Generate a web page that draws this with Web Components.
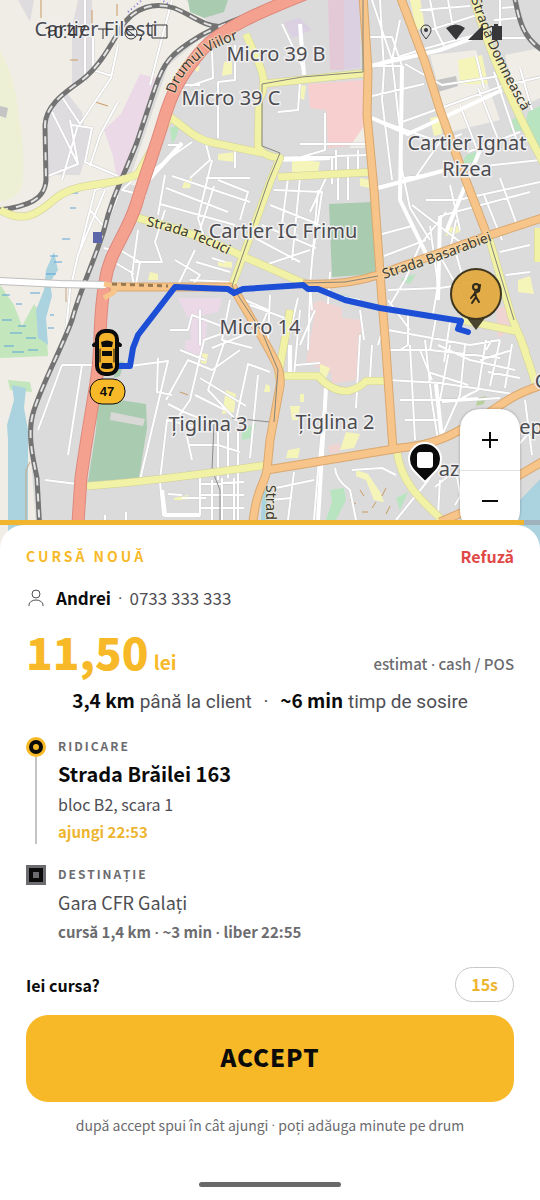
<!DOCTYPE html>
<html lang="ro">
<head>
<meta charset="utf-8">
<meta name="viewport" content="width=device-width, initial-scale=1">
<title>Cursă nouă</title>
<style>
  body {
    margin: 0;
    background: #fff;
    color: #0b0b0c;
    font-family: "Noto Sans CJK SC", "Noto Sans", sans-serif;
    --accent: #f7b928;
    --danger: #e04848;
    --muted: #6c6c70;
    --soft: #4e4e54;
  }

  /* the CJK face has a very wide middle dot */
  i {
    font-family: Roboto, sans-serif;
    font-style: normal;
  }
</style>
</head>
<body>
<ride-app>
  <ride-map slot="map"></ride-map>
  <system-bar slot="map">10:47</system-bar>
  <zoom-control slot="map"></zoom-control>

  <ride-timer slot="sheet" left="97"></ride-timer>
  <ride-sheet slot="sheet">
    <ride-header>CURSĂ NOUĂ</ride-header>
    <ride-client phone="0733 333 333">Andrei</ride-client>
    <ride-price unit="lei">11,50<span slot="note">estimat <i>·</i> cash / POS</span></ride-price>
    <ride-metrics>
      <b>3,4 km</b> până la client <i>·</i> <b>~6 min</b> timp de sosire
    </ride-metrics>
    <ride-stop kind="pickup" label="RIDICARE">
      Strada Brăilei 163
      <span slot="detail">bloc B2, scara 1</span>
      <span slot="time">ajungi 22:53</span>
    </ride-stop>
    <ride-stop kind="dropoff" label="DESTINAȚIE">
      Gara CFR Galați
      <span slot="time">cursă 1,4 km <i>·</i> ~3 min <i>·</i> liber 22:55</span>
    </ride-stop>
    <ride-confirm seconds="15">
      Iei cursa?
      <span slot="note">după accept spui în cât ajungi <i>·</i> poți adăuga minute pe drum</span>
    </ride-confirm>
  </ride-sheet>
</ride-app>

<script>
(function () {
  // registers an element that only clones its markup; %name% is filled from attributes
  function define(name, html) {
    class Part extends HTMLElement {
      constructor() {
        super();
        this.attachShadow({mode: 'open'});
      }

      connectedCallback() {
        const template = document.createElement('template');
        template.innerHTML = html.replace(/%(\w+)%/g, (all, key) => this.getAttribute(key) || '');
        this.shadowRoot.replaceChildren(template.content.cloneNode(true));
      }
    }

    window.customElements.define(name, Part);
  }

  define('ride-app', `
    <style>
      :host {
        display: flex;
        flex-direction: column;
        min-height: 100vh;
      }
      .map {
        position: relative;
        flex: 1;
        min-height: 320px;
        /* the map goes on behind the rounded corners of the sheet */
        margin-bottom: -32px;
        overflow: hidden;
      }
      .sheet {
        position: relative;
      }
    </style>
    <div class="map"><slot name="map"></slot></div>
    <main class="sheet"><slot name="sheet"></slot></main>
  `);

  define('ride-map', `
    <style>
      :host { position: absolute; inset: 0; }
      svg { display: block; width: 100%; height: 100%; }
      path { stroke-linejoin: round; }
      .line path, .line use { fill: none; }
      .place { font: 20px "Noto Sans", sans-serif; fill: #4c4c50; stroke: #f0f0f0; stroke-width: 3; paint-order: stroke; text-anchor: middle; }
      .street { font: 14px "Noto Sans", sans-serif; fill: #3c3a30; stroke: #f5f0cf; stroke-width: 2; stroke-opacity: .5; paint-order: stroke; }
      .badge { font: bold 13px "Liberation Sans", Arial, sans-serif; text-anchor: middle; fill: #0b0b0c; }
    </style>
    <svg viewBox="0 0 540 552" preserveAspectRatio="xMidYMin slice" role="img" aria-label="Hartă">
      <defs>
        <path id="red" d="M305-6C260 12 222 28 202 50C180 76 172 92 163 122C154 152 146 172 136 205C126 236 109 252 105 282C98 320 102 340 97 376C92 410 86 440 81 478L76 552"/>
        <path id="rail" d="M0 210C28 206 45 200 46 180L45 125C46 104 66 92 82 80C100 66 110 46 121 28C134 6 156 2 174 8C194 16 202 26 222 27M285 0C260 12 220 24 200 36C170 54 164 62 155 88L137 142C124 176 112 196 104 230C94 262 80 290 72 320C60 352 44 380 34 410C26 434 34 462 37 478L41 552M514-6C519 20 522 38 545 52"/>
        <path id="yellow" d="M0 210C24 224 38 214 56 198C80 180 110 188 138 174L170 117C186 128 196 140 214 143L262 153M246 34C254 56 272 78 259 100L258 146Q262 156 280 158L270 182L232 286M262 84L367 73M278 177L374 172M134 217C170 226 206 238 240 255L310 286M87 486C150 482 200 474 268 465M280 376H318Q332 392 348 391Q360 388 366 381H388M473-4C488 50 516 112 545 166M489 238L512 318L526 352M462 320L515 331M520 336C526 356 532 370 536 386M397 452C402 486 424 502 442 520M538 228V262M278 378L290 310"/>
        <path id="orange" d="M363-4L368 70L367 115L374 190L382 300L386 350L393 450M400-4L425 62L440 110L460 165L487 235M104 287H232M303 284Q345 286 378 275L487 236L545 217M232 286L258 330C276 362 282 370 280 386L270 440L267 470C264 486 256 488 252 530M267 470L400 448C444 444 460 430 490 412C510 398 520 392 545 384M518 476L545 460M440 522L468 510"/>
        <path id="lines" d="M85 0V82M93 30V70L112 76M172 0L164 30L150 85M118 45L111 78L80 124L60 94M52 112L78 164L70 120M72 125L92 128L85 162L118 176M78 164L48 176M118 102L100 135L90 166M78 125L62 180M212 50L213 78L190 86M178 85H200M235 45V80L218 82M218 82V138M205 140L210 160L190 178M168 145H182L150 180M192 142L150 172M235 150V168M282 24L302 66L304 75M300 82L298 110L278 112M325 113V150L298 158M300 144H366M270 158L368 155M336 150V170M348 155V172M358 150V172M372 0L392 60L400 130L402 170L410 208L430 240M380 0L384 70L382 100L392 180M370 37H392L402 66H370M392 60L400 20M370 66L420 50L478 34M405 64L442 85L500 76M372 96L424 84M372 118L406 130L440 142L415 178L378 188M402 122L502 86L545 76M430 0L436 30L444 46M448 0L456 44M420 10L470 6M430 30L480 14M478 88L500 144M460 105L478 152M494 72L516 138M520 68L532 110M440 142L462 134M500 0V38H525M518 18L494 20M502 8L514 7M468 152L520 132M404 178L455 170M476 55L484 88M450 185L460 230M426 200H458L540 182M440 216L530 192M484 195L502 240M500 178L518 228M446 212L420 245L405 280L390 305M374 188L446 170L540 160M382 234L412 226M384 256L426 240M430 226L438 285L432 320M456 220L450 250M388 290L440 288L478 282M440 256L470 310M388 300L410 330M412 205L468 248M455 250L465 285M388 330L470 345L500 340M408 312V345L400 350M436 318L430 350M450 322L444 362M500 252L530 245M506 275L530 272M492 340L486 350M388 380L440 383L500 392L520 395M410 345L415 440M390 350H430L500 358M425 340L432 402L438 440M438 345L470 360L515 370M450 345L440 400M465 345L460 395L440 440M486 340L478 390L462 398M500 340L490 386M512 344L505 388M400 400H440L478 398M405 420H440M442 402L500 398M420 350L432 380M428 372L468 385M480 360L512 350M488 372L520 378M100 364L92 365H62L38 430M82 365L68 455M130 366L168 361L140 480M158 358L157 392L172 395M166 400L188 360L212 370L240 350M176 420L190 400L204 340L232 330M168 404L184 412L214 424M195 395L225 410M160 480L167 420L200 428M188 445H218L240 452M187 437L192 460M225 340L208 390L236 420L248 364L270 372M180 350L205 360M212 348L256 330M200 378L246 406M228 425V478M238 428V520M218 426V480M258 375L250 458M45 480L85 485M160 482L163 515H200V478M105 515V520M126 512V520M200 484L244 482M200 495H244M200 508H244M212 480V520M222 478V520M234 478V520M168 494L182 495M182 498H206M290 345V375M300 310L294 376M315 310L300 345M296 365L320 363M360 335L356 408M372 345L370 378M326 388L318 470L314 520M335 468Q336 480 350 490L356 520M352 470L382 468L396 475M276 488L314 480M294 472L288 520M270 500L292 498M430 478L396 520M455 465L462 505L490 490M440 480L438 515M470 480L455 505M435 487L458 468L520 440M525 400L532 455M500 466L536 425M146 196L122 190L142 172M165 175L158 215M160 204L235 225M166 188L228 212M172 176L250 202M206 178H250M214 186L200 230M212 160L198 218L205 240M218 180L248 192L240 220M165 210L155 242L162 262H135M138 230L132 275L135 290M120 250L140 262L136 284M114 262L134 274M104 248L118 252M175 260L200 275L190 288M190 280L232 282M195 250L178 285M212 258L225 262M196 262L230 272M170 330H188L192 315L232 330M230 300L222 340L252 348M200 310V345M245 300L268 310L260 330M250 305L290 320M270 205L320 225M274 190L322 192L312 260M262 225L316 248M255 238L300 262M318 190L310 285M288 178L280 240M300 178L292 260M338 172V200M332 156V184M348 172V200M326 178L310 212M265 265L310 250M330 272L328 304M310 285L312 310M270 295L268 340M298 298L288 340M310 292L308 350M332 295L360 300M360 310L364 340M384 325L378 345M118 195L105 228L90 210M105 190L78 255L70 290L66 330M120 180L95 190L80 250"/>
        <path id="domneasca" d="M471-1C486 46 509 88 523 112"/>
        <path id="basarabiei" d="M384 279L430 264L492 241"/>
        <path id="tecuci" d="M146 226C176 232 204 242 230 256"/>
        <path id="viilor" d="M175 94C182 70 204 50 236 40"/>
        <path id="strad" d="M266 485V552"/>
      </defs>

      <!-- land use -->
      <path fill="#dcdbdc" d="M0 0H540V552H0Z"/>
      <path fill="#f0ede6" d="M0 0H186L212 26L162 64L118 180L66 340L28 420L38 552H0Z"/>
      <path fill="#f0ede6" d="M205 34L168 66L128 184L136 186L166 98L200 50ZM430 55L476 50L500 120L450 132ZM505 55L540 48V98L518 108ZM352 130L365 126V148H350Z"/>
      <path fill="#edf0d5" d="M0 50Q16 80 18 110Q26 150 22 188Q14 200 0 202Z"/>
      <path fill="#dedcdf" d="M78 0H92V75L72 84V28ZM52 102L66 92L82 112L84 126L94 128L80 175H48V122ZM18 0H34L30 22Z"/>
      <path fill="#ebd9e8" d="M140 74L156 78L121 180H117L113 156L104 130L121 114ZM178 298H222L218 312L188 318ZM190 318H208L204 350H192ZM186 340H200V354H184Z"/>
      <path fill="#e2c9d5" d="M328 0H344V70H330Z"/>
      <path fill="#dad0e2" d="M344 0H360V68L344 69ZM284 22L300 18L312 30L292 38Z"/>
      <path fill="#f7cfce" d="M308 84L364 80V126L350 146L328 148L326 110L310 108Z"/>
      <path fill="#f0d4d1" d="M320 300L342 308V318L362 320L356 380L332 384V374L306 362L314 318L308 306ZM496 308L508 306L510 330L498 338ZM328 446L340 443V452L330 454Z"/>
      <path fill="#a9cbaf" d="M188 0H228L224 12L204 18L190 12ZM329 204L372 202L376 274L332 277ZM98 402L120 400L146 404L147 428L139 478L88 482L96 430ZM114 360L124 362L120 376L114 378Z"/>
      <path fill="#d8d8d7" d="M111 412L145 419L143 426L110 420Z"/>
      <path fill="#c3e6bd" d="M0 285L14 305L22 326L34 304L46 322L48 356L0 358ZM8 380L30 382L32 392L10 390ZM0 320L12 340L46 342V356H0Z"/>
      <path fill="#aad3df" d="M54 252L58 270L50 282L52 296L46 318L48 345L38 338L36 310L44 290L46 270ZM12 385L26 388L24 408L28 430V552H8V440L7 425L14 400ZM520 500L545 474V552H518ZM262 488L266 480L270 552H260Z"/>
      <path fill="#b8e4c0" d="M512 120L522 114L524 130L510 132ZM528 112L540 106V156L524 130ZM466 155L476 152V162L462 164ZM402 278L416 274L410 284L402 282ZM242 428L256 424L252 438L242 440ZM330 490L344 488L346 500L336 520H326L332 502ZM170 128L180 124L176 138L172 144ZM340 294L356 298L352 306ZM396 498L408 492L400 510Z"/>
      <path fill="#f6f5b9" d="M458 60L482 55L488 84L460 84ZM410 0L420-2L425 28L416 30ZM300 85L306 86L304 100L300 98ZM430 118L440 116L442 134L434 136ZM445 230L460 224V232L446 236ZM518 280L530 276L534 294L518 292ZM226 390L236 394L234 412L222 414ZM200 353L208 354L206 364L198 362ZM320 364L330 368L326 378L320 376ZM346 432L360 434L354 448L340 450ZM290 406L300 406L298 420H292ZM300 394L304 394V402H300ZM218 154L236 152L234 162L218 160ZM224 62L232 60V74L222 76ZM192 68L200 66L198 72ZM356 470L368 474L380 492L384 502L374 500L366 480L356 476ZM288 450L300 448L298 458H286ZM184 182L192 178L190 188L182 188ZM150 272L158 274V280H148ZM292 159L320 162L318 172H292ZM218 260L232 262V268L218 266ZM360 178L370 180V188L360 186ZM174 498L188 495V500H174ZM266 384L270 386V392H264ZM498 62L504 60L506 78L500 80Z"/>
      <path fill="#c4c4c4" d="M437 80L456 76L458 86L438 92ZM0 106L8 108L6 118L0 116Z"/>
      <path fill="#b7cf9b" d="M478 398L486 396L484 404L476 406Z"/>
      <g class="line">
        <path stroke="#5aa3d8" stroke-width="1" d="M72 193H78M70 208H76M62 239H70M50 256H58M54 262H62M46 274H56M2 295H10M16 304H22M30 293H40M2 320H12M10 333H22M26 338H36M4 346H14M48 328H54M50 315H54M12 352H24M28 350H38M18 326H26"/>
        <path stroke="#c99a62" stroke-width="1" d="M41 0V18M92 10V28M117 4V16M70 60H78M95 102L108 106M350 500L356 504M360 490L364 496M372 508L376 502M386 488L382 496M362 512H368M390 506L386 514M180 392L188 395"/>
        <path stroke="#7a74d8" stroke-width="2" stroke-dasharray="1 3" d="M128 12L142 0M160-1L172 6"/>
        <path stroke="#c4a685" stroke-width="1" d="M66 284L66 302M30 462L26 470V552"/>

        <!-- streets -->
        <use href="#lines" stroke="#cfcfd1" stroke-width="3"/>
        <use href="#lines" stroke="#fff" stroke-width="2"/>
        <path stroke="#fff" stroke-width="4" d="M370 66L440 50L478 36M372 118L408 134L502 90M378 188L446 170M402 66L400 200L430 262M446 232L480 150M440 216L438 300M300 24L304 75M182 143L150 178M326 388L318 520M436 384L442 440M290 345V376M276 160L330 158M162 490L165 515H200"/>
        <path stroke="#8b8b8b" stroke-width="1" d="M232 418L270 422M214 424L212 470L220 490V552"/>
        <use href="#rail" stroke="#737373" stroke-width="5"/>
        <use href="#rail" stroke="#e4e4e4" stroke-width="2" stroke-dasharray="8 8"/>
        <use href="#yellow" stroke="#cfcf98" stroke-width="8"/>
        <use href="#yellow" stroke="#f1f2a5" stroke-width="7"/>
        <use href="#orange" stroke="#d9a970" stroke-width="9"/>
        <use href="#orange" stroke="#f7c489" stroke-width="7"/>
        <use href="#red" stroke="#dd897d" stroke-width="13"/>
        <use href="#red" stroke="#f4a190" stroke-width="11"/>
        <path stroke="#bdbdbd" stroke-width="8" d="M0 281L60 284L104 285"/>
        <path stroke="#fff" stroke-width="6" d="M0 281L60 284L106 285"/>
        <path stroke="#f7c489" stroke-width="5" d="M104 284L116 286L114 292L104 298"/>
        <!-- tram -->
        <path stroke="#85857a" stroke-width="1" d="M363-4V72L302 77L262 84V146L280 153L268 182L232 286L262 332L278 370L274 422M303 283L345 282L378 276M489 238L514 320"/>
        <path stroke="#9a7a50" stroke-width="3" stroke-dasharray="5 4" d="M112 284L168 286"/>
      </g>
      <path fill="#5c66a8" d="M93 232H102V243H93Z"/>

      <g class="place">
        <text x="96" y="36">Cartier Filești</text>
        <text x="276" y="61">Micro 39 B</text>
        <text x="231" y="105">Micro 39 C</text>
        <text x="467" y="150">Cartier Ignat</text>
        <text x="467" y="176">Rizea</text>
        <text x="283" y="238">Cartier IC Frimu</text>
        <text x="260" y="334">Micro 14</text>
        <text x="208" y="431">Țiglina 3</text>
        <text x="335" y="429">Țiglina 2</text>
        <text x="449" y="476">az</text>
        <text x="531" y="434">ep</text>
        <text x="541" y="388">C</text>
      </g>
      <g class="street">
        <text><textPath href="#viilor">Drumul Viilor</textPath></text>
        <text><textPath href="#tecuci">Strada Tecuci</textPath></text>
        <text><textPath href="#basarabiei">Strada Basarabiei</textPath></text>
        <text><textPath href="#domneasca">Strada Domnească</textPath></text>
        <text><textPath href="#strad">Strad</textPath></text>
      </g>

      <path fill="none" stroke="#1c4fd6" stroke-width="6" stroke-linecap="round" d="M118 366H130L133 348L138 335L175 287L228 289L234 293L243 289L303 285L308 289L318 289L345 300L380 308L461 321L458 329L468 332"/>

      <!-- taxi -->
      <g stroke-linecap="round">
        <path stroke="#0b0b0c" stroke-width="4" d="M94 345L98 342M120 345L116 342"/>
        <rect x="97" y="331" width="20" height="43" rx="8" fill="#f4b32a" stroke="#0b0b0c" stroke-width="4"/>
        <path fill="#0b0b0c" d="M101 342Q107 339 113 342L112 347H102ZM102 351H112V356H102ZM102 363H112L113 368Q107 370 101 368Z"/>
        <path stroke="#0b0b0c" d="M100 349V362M114 349V362"/>
      </g>
      <rect x="90" y="379" width="35" height="25" rx="12" fill="#f7b928" stroke="#0b0b0c" stroke-width="1"/>
      <text class="badge" x="107" y="396">47</text>

      <!-- client -->
      <path fill="#4a432f" d="M467 318H485L476 330Z"/>
      <circle cx="476" cy="294" r="25" fill="#e2a83c" fill-opacity=".92" stroke="#3e361f" stroke-width="2"/>
      <g fill="none" stroke="#2d281a" stroke-width="2" stroke-linecap="round">
        <circle cx="476" cy="287" r="3"/>
        <path d="M480 285L479 291L475 293L471 298M475 292L476 297L472 303M476 297L479 302"/>
      </g>

      <!-- destination -->
      <path fill="#0b0b0c" stroke="#fff" stroke-width="2" d="M425 482C418 474 409 469 409 459A16 16 0 0 1 441 459C441 469 432 474 425 482Z"/>
      <rect x="417" y="452" width="16" height="16" rx="3" fill="#fff"/>
    </svg>
  `);

  define('system-bar', `
    <style>
      :host {
        position: absolute;
        inset: 22px 36px auto 44px;
        display: flex;
        justify-content: space-between;
        align-items: center;
        height: 20px;
        font: 17px/20px Roboto, sans-serif;
        color: #37373a;
      }
      div { display: flex; align-items: center; gap: 8px; }
      svg { display: block; }
    </style>
    <div>
      <slot></slot>
      <svg width="76" height="20" viewBox="0 0 76 20" fill="none" stroke="currentColor">
        <path d="M4 7H14M9 7V17"/>
        <circle cx="37" cy="11" r="6"/><path d="M32 7L42 15M48 13L46 18"/>
        <path d="M58 3H73V16H58Z"/>
      </svg>
    </div>
    <svg width="84" height="20" viewBox="0 0 84 20" fill="currentColor">
      <path fill="none" stroke="currentColor" stroke-width="1" d="M6 17C3 13 1 11 1 8A5 5 0 0 1 11 8C11 11 9 13 6 17Z"/>
      <circle cx="6" cy="8" r="2"/>
      <path d="M26 6Q36-1 45 6L36 18ZM48 18L63 3V18ZM72 18V4H74V2H78V4H82V18Z"/>
    </svg>
  `);

  define('zoom-control', `
    <style>
      :host {
        position: absolute;
        right: 20px;
        bottom: 21px;
        display: flex;
        flex-direction: column;
        width: 60px;
        border-radius: 20px;
        background: #fff;
        box-shadow: 0 0 3px rgba(0, 0, 0, .3);
      }
      button {
        display: grid;
        place-items: center;
        height: 61px;
        padding: 0;
        border: 0;
        background: none;
        color: #0b0b0c;
      }
      button + button { border-top: 1px solid #e3e3e5; }
      path { stroke: currentColor; stroke-width: 2; }
    </style>
    <button type="button" aria-label="Mărește"><svg width="16" height="16"><path d="M0 8H16M8 0V16"/></svg></button>
    <button type="button" aria-label="Micșorează"><svg width="16" height="16"><path d="M0 8H16"/></svg></button>
  `);

  define('ride-timer', `
    <style>
      :host { display: block; height: 5px; background: rgba(150, 150, 160, .55); }
      div { width: %left%%; height: 100%; background: #f1b52f; }
    </style>
    <div></div>
  `);

  define('ride-sheet', `
    <style>
      :host {
        display: flex;
        flex-direction: column;
        padding: 19px 26px 13px;
        border-radius: 24px 24px 0 0;
        background: #fff;
      }
      .home {
        align-self: center;
        width: 142px;
        height: 5px;
        margin-top: 44px;
        border-radius: 3px;
        background: #69696b;
      }
    </style>
    <slot></slot>
    <div class="home"></div>
  `);

  define('ride-header', `
    <style>
      :host {
        display: flex;
        justify-content: space-between;
        line-height: 24px;
      }
      h1 { margin: 0; font-size: 14px; line-height: 24px; letter-spacing: 3px; color: var(--accent); }
      button {
        padding: 0;
        border: 0;
        background: none;
        font: bold 16px/24px "Noto Sans CJK SC", sans-serif;
        color: var(--danger);
      }
    </style>
    <h1><slot></slot></h1>
    <button type="button">Refuză</button>
  `);

  define('ride-client', `
    <style>
      :host {
        display: flex;
        align-items: center;
        margin-top: 18px;
        font-size: 17px;
        line-height: 24px;
        color: var(--soft);
      }
      svg { margin: 0 11px 0 1px; }
      b { color: #0b0b0c; }
      i { margin: 0 7px; font-family: Roboto, sans-serif; font-style: normal; }
    </style>
    <svg width="18" height="18" viewBox="0 0 18 18" fill="none" stroke="currentColor">
      <circle cx="9" cy="5" r="4"/>
      <path d="M2 17V16A7 5 0 0 1 16 16V17"/>
    </svg>
    <b><slot></slot></b><i>·</i><span>%phone%</span>
  `);

  define('ride-price', `
    <style>
      :host {
        display: flex;
        justify-content: space-between;
        align-items: baseline;
        height: 48px;
        margin-top: 17px;
        line-height: 48px;
      }
      .sum { font-size: 44px; font-weight: 900; color: var(--accent); }
      small { margin-left: 5px; font-size: 19px; font-weight: bold; line-height: 24px; }
      .note { font-size: 15px; font-weight: 500; line-height: 24px; color: var(--muted); }
    </style>
    <div class="sum"><slot></slot><small>%unit%</small></div>
    <div class="note"><slot name="note"></slot></div>
  `);

  define('ride-metrics', `
    <style>
      :host {
        display: block;
        margin-top: 13px;
        font: 19px/28px Roboto, sans-serif;
        text-align: center;
        color: var(--soft);
      }
      ::slotted(b) { font: bold 19px/24px "Noto Sans CJK SC", sans-serif; color: #0b0b0c; }
      ::slotted(i) { margin: 0 7px; }
    </style>
    <slot></slot>
  `);

  define('ride-stop', `
    <style>
      :host {
        display: grid;
        grid-template-columns: 20px 1fr;
        column-gap: 12px;
        margin-top: 20px;
      }
      .track { display: flex; flex-direction: column; align-items: center; }
      .mark { box-sizing: border-box; flex: none; width: 20px; height: 20px; margin-top: 1px; background: #0b0b0c; }
      .mark::after { content: ""; display: block; box-sizing: border-box; }
      .pickup .mark { border: 3px solid var(--accent); border-radius: 50%; padding: 4px; }
      .pickup .mark::after { width: 6px; height: 6px; border-radius: 50%; background: var(--accent); }
      .pickup::after { content: ""; flex: 1; width: 2px; background: #c4c4c7; }
      .dropoff .mark { border: 3px solid #6c6c70; padding: 4px; }
      .dropoff .mark::after { width: 6px; height: 6px; background: #6c6c70; }
      .body { display: flex; flex-direction: column; gap: 4px; }
      .label { font-size: 12px; font-weight: bold; line-height: 20px; letter-spacing: 2px; color: var(--muted); }
      .name { font-size: 18px; line-height: 28px; color: var(--soft); }
      ::slotted(span) { display: block; line-height: 24px; }
      ::slotted([slot=detail]) { font-size: 16px; color: var(--soft); }
      ::slotted([slot=time]) { font-size: 15px; font-weight: bold; color: var(--muted); }
      .pickup + .body .name { font-size: 20px; font-weight: bold; color: #0b0b0c; }
      .pickup + .body ::slotted([slot=time]) { color: #edb52f; }
    </style>
    <div class="track %kind%"><span class="mark"></span></div>
    <div class="body">
      <div class="label">%label%</div>
      <div class="name"><slot></slot></div>
      <slot name="detail"></slot>
      <slot name="time"></slot>
    </div>
  `);

  define('ride-confirm', `
    <style>
      :host { display: flex; flex-direction: column; margin-top: 22px; }
      .ask {
        display: flex;
        justify-content: space-between;
        align-items: center;
        font-size: 16px;
        font-weight: bold;
      }
      .left {
        padding: 0 15px;
        border: 1px solid #c8c8cb;
        border-radius: 18px;
        line-height: 33px;
        color: #edb52f;
      }
      button {
        height: 87px;
        margin-top: 13px;
        padding: 0 0 4px;
        border: 0;
        border-radius: 22px;
        background: var(--accent);
        font: 900 24px/32px "Noto Sans CJK SC", sans-serif;
        letter-spacing: 1px;
        color: #0b0b0c;
      }
      .note { margin-top: 11px; font-size: 14px; line-height: 24px; text-align: center; color: var(--muted); }
    </style>
    <div class="ask"><span><slot></slot></span><span class="left">%seconds%s</span></div>
    <button type="button">ACCEPT</button>
    <div class="note"><slot name="note"></slot></div>
  `);
})();
</script>
</body>
</html>
